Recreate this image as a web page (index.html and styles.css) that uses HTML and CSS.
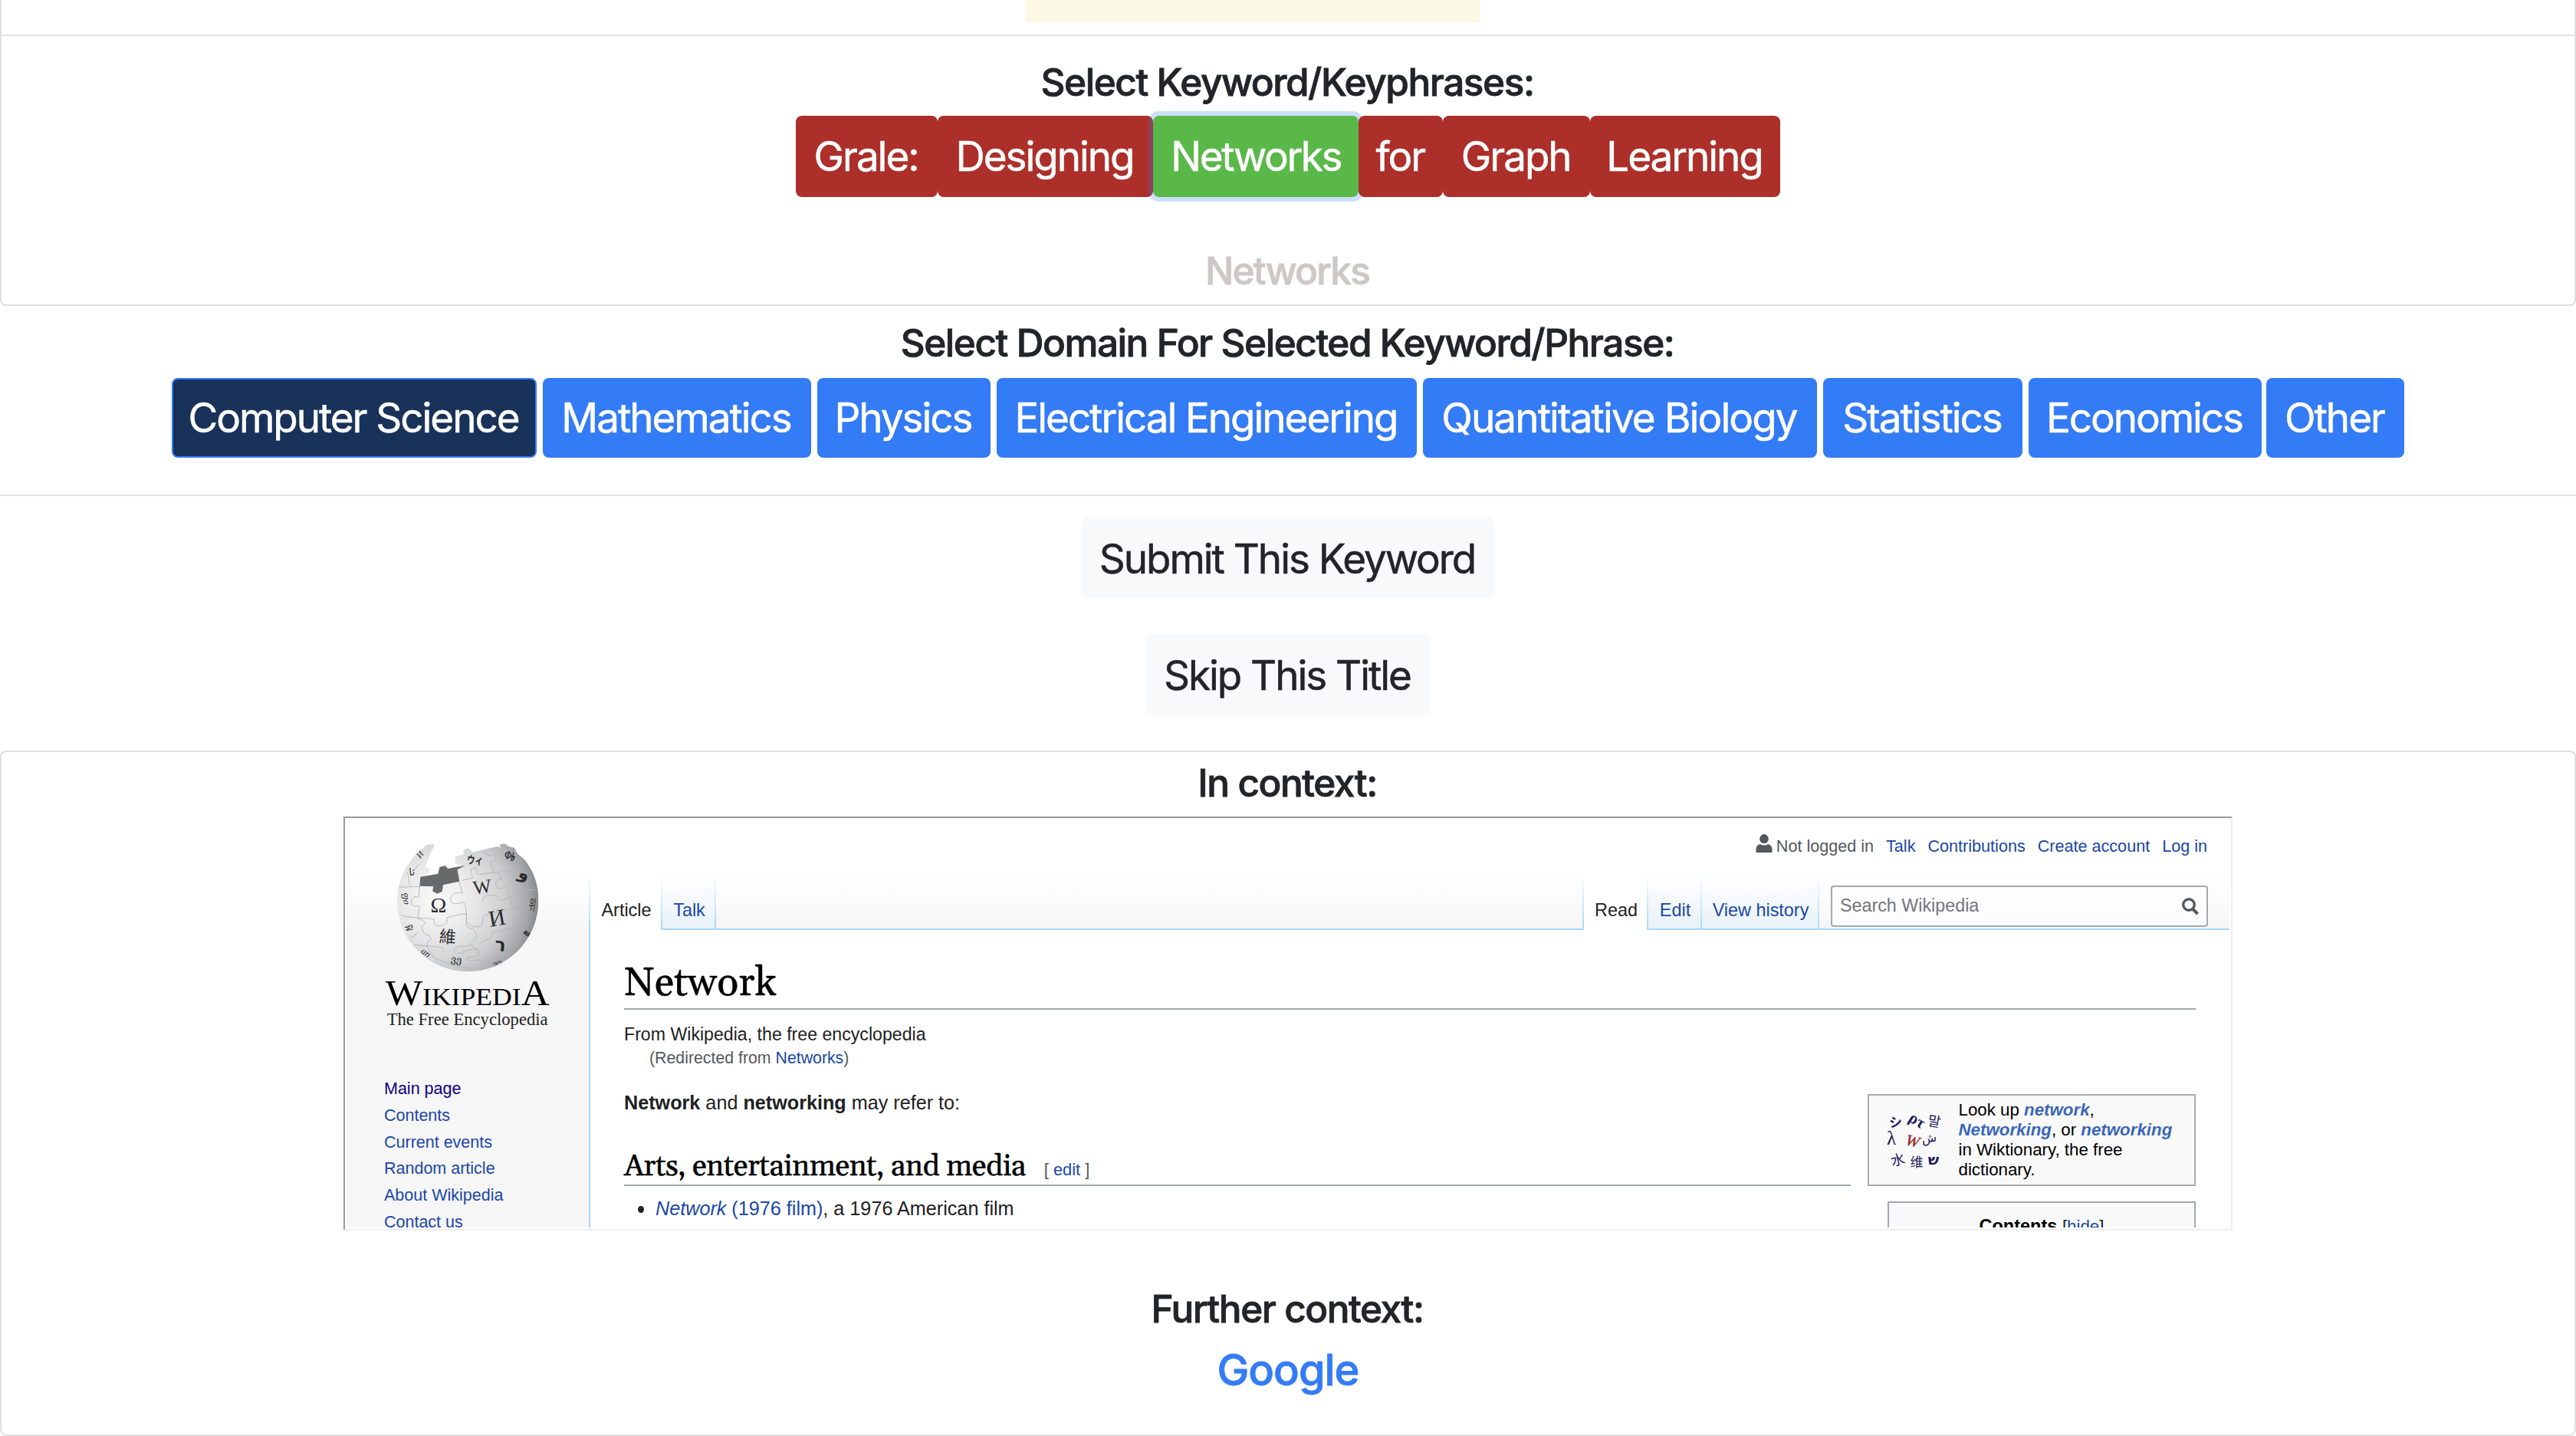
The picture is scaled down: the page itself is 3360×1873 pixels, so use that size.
FILE: index.html
```html
<!DOCTYPE html>
<html lang="en">
<head>
<meta charset="utf-8">
<title>Keyword selection</title>
<link rel="stylesheet" href="styles.css">
</head>
<body>
<section class="card card-keywords">
  <div class="notice"></div>
  <hr class="rule rule-top">
  <h4 class="heading">Select Keyword/Keyphrases:</h4>
  <div class="words">
    <button class="btn word" style="width:184.5px">Grale:</button>
    <button class="btn word" style="width:281.5px">Designing</button>
    <button class="btn word word-on" style="width:268px">Networks</button>
    <button class="btn word" style="width:110px">for</button>
    <button class="btn word" style="width:192px">Graph</button>
    <button class="btn word" style="width:247.5px">Learning</button>
  </div>
  <h4 class="heading selected">Networks</h4>
</section>

<section class="domain">
  <h4 class="heading">Select Domain For Selected Keyword/Phrase:</h4>
  <div class="domains">
    <button class="btn dom dom-on" style="width:476px">Computer Science</button>
    <button class="btn dom" style="width:350px">Mathematics</button>
    <button class="btn dom" style="width:226px">Physics</button>
    <button class="btn dom" style="width:548px">Electrical Engineering</button>
    <button class="btn dom dom-wide" style="width:514px">Quantitative Biology</button>
    <button class="btn dom" style="width:260px">Statistics</button>
    <button class="btn dom" style="width:304px">Economics</button>
    <button class="btn dom" style="width:180px">Other</button>
  </div>
  <hr class="rule">
</section>

<section class="actions">
  <button class="btn light" style="width:540px">Submit This Keyword</button>
  <button class="btn light" style="width:372px">Skip This Title</button>
</section>

<section class="card card-context">
  <h4 class="heading">In context:</h4>
  <div class="frame">
    <div class="wiki">
      <aside class="side">
        <svg class="logo" viewBox="210 140 660 750" width="220" height="250">
          <defs>
            <radialGradient id="ball" gradientUnits="userSpaceOnUse" cx="420" cy="370" r="420">
              <stop offset="0" stop-color="#fafafa"/><stop offset=".35" stop-color="#e8e8e9"/><stop offset=".65" stop-color="#cbccce"/><stop offset=".86" stop-color="#a3a4a7"/><stop offset="1" stop-color="#77787b"/>
            </radialGradient>
            <clipPath id="sphere"><path d="M382 154L408 152L410 160L396 182L386 214L374 238L390 250L388 270L355 282L352 316L400 322L402 340L424 344L440 334L438 318L506 298L502 250L528 238L490 228L492 200L526 192L522 176L540 168L554 176L556 184L660 160L670 170L664 154L684 150L702 162L722 166L736 190L762 212C800 260 817 310 817 374A276 276 0 0 1 264 374C264 280 316 198 382 154Z"/></clipPath>
          </defs>
          <g clip-path="url(#sphere)">
            <rect x="260" y="140" width="560" height="515" fill="url(#ball)"/>
            <g fill="none" stroke="#b0b1b3" stroke-width="2.6" stroke-linejoin="round">
              <path d="M268 320C300 322 330 318 352 318M352 318L348 360C330 350 314 368 322 388C332 402 344 388 350 396L346 444M280 430C310 442 380 440 410 446C404 470 420 478 438 470C468 466 456 452 460 440C490 430 520 424 536 426"/>
              <path d="M506 298L520 344C490 334 468 356 474 376C484 394 508 380 524 380C540 400 530 430 538 460C552 474 570 480 588 474C606 460 592 440 604 432C630 424 676 412 696 408"/>
              <path d="M536 426L534 470C550 490 562 474 572 500C580 524 552 536 550 544C566 562 588 566 584 584C570 600 540 586 536 602C546 616 580 600 594 606L600 640"/>
              <path d="M520 294L560 284C552 262 548 244 566 246C584 248 566 266 584 270L660 262C670 244 674 268 690 258L732 246C740 230 726 214 744 214L766 214"/>
              <path d="M600 376C596 358 612 352 630 354C664 346 656 366 668 372C690 370 730 354 726 340C740 326 780 334 806 330"/>
              <path d="M660 262L672 290C650 286 644 306 656 322C668 334 680 318 688 316C706 324 696 344 704 362L716 400C742 406 760 404 756 420C744 434 736 420 736 444C746 470 768 450 780 468"/>
              <path d="M610 178C614 204 626 196 642 192C660 202 650 218 634 220C620 232 646 244 640 262"/>
              <path d="M346 444C370 450 380 460 364 470C352 482 372 510 388 510C402 516 396 534 384 530L380 552L404 590M346 500C330 500 340 516 318 514M330 546C370 550 410 552 440 556C454 566 440 574 446 574M488 578C480 558 500 550 530 552L560 546M588 540C620 520 640 520 636 500C650 486 664 500 686 484L716 478"/>
              <path d="M500 580C510 572 524 590 520 572L580 560M706 520C700 490 720 474 724 500L762 484M620 616C650 590 680 600 706 580M300 260C320 290 300 290 318 320M400 590C450 620 520 640 560 636M328 256L350 230"/>
            </g>
            <g fill="#2b2b2d" font-family="'Liberation Serif', 'DejaVu Serif', serif" text-anchor="middle">
              <text x="426" y="420" font-size="84">Ω</text>
              <text transform="translate(600 344) rotate(-8)" font-size="76">W</text>
              <text transform="translate(660 470) rotate(-10)" font-size="90">И</text>
              <text transform="translate(460 538) rotate(4)" font-size="66" font-family="'Noto Sans CJK TC', sans-serif">維</text>
              <text transform="translate(568 230) rotate(4) scale(.75 1)" font-size="42" font-weight="bold" font-family="'Noto Sans CJK JP', sans-serif">ウィ</text>
              <text transform="translate(666 570) rotate(5)" font-size="72" font-weight="bold" font-family="'DejaVu Sans', sans-serif">ר</text>
              <text transform="translate(754 288) rotate(20)" font-size="66" font-weight="bold" font-family="'DejaVu Sans', sans-serif">و</text>
              <text transform="translate(790 410) rotate(8) scale(.5 1)" font-size="58" font-family="'Noto Sans CJK KR', sans-serif">위</text>
              <text transform="translate(700 212) rotate(20) scale(.7 1)" font-size="46" font-weight="bold">Ф৳</text>
              <text transform="translate(324 274) rotate(-20)" font-size="40" font-style="italic">تا</text>
              <text transform="translate(362 200) rotate(-50)" font-size="34" font-style="italic">И</text>
              <text transform="translate(288 366) rotate(86)" font-size="34" font-style="italic">ფი</text>
              <text transform="translate(296 480) rotate(66)" font-size="36" font-style="italic">ฟิ</text>
              <text transform="translate(370 586) rotate(38)" font-size="36" font-style="italic">an</text>
              <text transform="translate(494 616) rotate(8)" font-size="38">ვე</text>
              <text transform="translate(658 624) rotate(-18)" font-size="24">უო</text>
              <text transform="translate(786 512) rotate(-55)" font-size="36" font-weight="bold">จิ</text>
            </g>
          </g>
          <path d="M355 280L424 268L430 242L452 236L462 248L530 235L500 252L508 298L444 312L440 338L420 346L402 336L406 318L352 316Z" fill="#68696a"/>
          <g fill="#000" font-family="'Liberation Serif', serif">
            <text x="218" y="781" font-size="96" textLength="642" lengthAdjust="spacingAndGlyphs"><tspan font-size="138">W</tspan><tspan>IKIPEDI</tspan><tspan font-size="138">A</tspan></text>
            <text x="224" y="859" font-size="70" fill="#222" textLength="630" lengthAdjust="spacingAndGlyphs">The Free Encyclopedia</text>
          </g>
        </svg>
        <nav class="links">
          <a class="visited">Main page</a><a>Contents</a><a>Current events</a><a>Random article</a><a>About Wikipedia</a><a>Contact us</a>
        </nav>
      </aside>
      <div class="main">
        <header class="top">
          <div class="personal">
            <svg width="22" height="24" viewBox="0 0 22 24"><ellipse cx="11" cy="6.2" rx="5.8" ry="6.1" fill="#54595d"/><path d="M.5 24v-4.500c0-3.500 2.500-6 5.500-6.500 1.500 1.200 3 1.600 5 1.600s3.500-.4 5-1.600c3 .5 5.500 3 5.500 6.500v4.500z" fill="#54595d"/></svg>
            <span class="anon">Not logged in</span><a>Talk</a><a>Contributions</a><a>Create account</a><a>Log in</a>
          </div>
          <div class="tabs">
            <i class="sep"></i><span class="tab tab-on" style="width:92px">Article</span><i class="sep"></i><a class="tab" style="width:68px">Talk</a><i class="sep"></i>
            <span class="fill"></span>
            <i class="sep"></i><span class="tab tab-on" style="width:82px">Read</span><i class="sep"></i><a class="tab" style="width:68px">Edit</a><i class="sep"></i><a class="tab" style="width:151px">View history</a><i class="sep"></i>
            <div class="searchwrap"><div class="search"><span>Search Wikipedia</span>
              <svg width="22" height="23" viewBox="0 0 22 23" fill="none" stroke="#54595d"><circle cx="9" cy="9" r="7.300" stroke-width="3.400"/><path d="M13.800 14.200L20.500 21.200" stroke-width="4"/></svg></div></div>
          </div>
        </header>
        <article class="article">
          <h1>Network</h1>
          <div class="sub">From Wikipedia, the free encyclopedia</div>
          <div class="redir">(Redirected from <a>Networks</a>)</div>
          <div class="cols">
            <div class="text">
              <p><b>Network</b> and <b>networking</b> may refer to:</p>
              <h2>Arts, entertainment, and media<span class="edit">[ <a>edit</a> ]</span></h2>
              <ul><li><a><i>Network</i> (1976 film)</a>, a 1976 American film</li></ul>
            </div>
            <div class="boxes">
              <div class="wikt">
                <svg width="84" height="84" viewBox="0 0 84 84" fill="#1d1a5c" text-anchor="middle" font-family="'Liberation Serif', serif">
                  <text transform="translate(17 20) rotate(-4)" font-size="17" font-weight="bold" font-family="'Noto Sans CJK JP', sans-serif">シ</text>
                  <text transform="translate(41 17) rotate(32)" font-size="21" font-weight="bold">ρτ</text>
                  <text transform="translate(66 19) rotate(10)" font-size="18" font-family="'Noto Sans CJK KR', sans-serif">말</text>
                  <text x="11" y="43" font-size="25">λ</text>
                  <text transform="translate(37 45) rotate(14)" font-size="21" font-style="italic" font-weight="bold" fill="#9b3730">W</text>
                  <text transform="translate(61 40) rotate(-8)" font-size="16" font-family="'DejaVu Sans', sans-serif">ش</text>
                  <text transform="translate(21 69) rotate(-14)" font-size="18" font-family="'Noto Sans CJK JP', sans-serif">水</text>
                  <text x="44" y="72" font-size="17" font-family="'Noto Sans CJK SC', sans-serif">维</text>
                  <text x="66" y="69" font-size="19" font-weight="bold" font-family="'DejaVu Sans', sans-serif">ש</text>
                </svg>
                <div>Look up <a>network</a>,<br><a>Networking</a>, or <a>networking</a><br>in Wiktionary, the free<br>dictionary.</div>
              </div>
              <div class="toc"><b>Contents</b> <span>[<a>hide</a>]</span></div>
            </div>
          </div>
        </article>
      </div>
    </div>
  </div>
  <h4 class="heading further">Further context:</h4>
  <a class="google">Google</a>
</section>
</body>
</html>
```
FILE: styles.css
```css
* { box-sizing: border-box; }
body { margin: 0; background: #fff; color: #212529; font-family: Inter, "Liberation Sans", sans-serif; overflow: hidden; }
h1, h2, h4, p, ul { margin: 0; padding: 0; }
a { color: #1b47a9; text-decoration: none; }

.card { border: 2px solid #dfdfdf; border-radius: 8px; }
.card-keywords { height: 399px; border-top: 0; border-radius: 0 0 8px 8px; }
.notice { width: 592px; height: 29px; margin-left: 1336px; background: #fbf8e3; }
.rule { height: 2px; margin: 0; border: 0; background: #e5e5e5; }
.rule-top { margin-top: 16px; }
.heading { padding-right: 2px; font-size: 49.5px; line-height: 60px; font-weight: 500; letter-spacing: -1.45px; text-align: center; -webkit-text-stroke: .8px currentColor; }
.rule-top + .heading { margin-top: 30px; }
.selected { margin-top: 66px; color: #cec7c7; letter-spacing: -1.8px; }

.btn { flex: none; height: 106px; padding: 0 2px 0 0; border: 0; border-radius: 8px; font: 400 53px/106px Inter, "Liberation Sans", sans-serif; letter-spacing: -2.05px; text-align: center; white-space: nowrap; color: #fff; -webkit-text-stroke: .5px currentColor; }
.words { display: flex; justify-content: center; margin-top: 14px; }
.word { background: #ad2f2a; }
.word-on { padding: 0; background: #5ab848; box-shadow: 0 0 0 6px rgba(51, 122, 247, .25); letter-spacing: -2.4px; }

.domain { padding-top: 18px; }
.domains { display: flex; gap: 8px; width: 2912px; margin: 16px auto 48px; }
.dom { height: 104px; padding-top: 1px; line-height: 99px; border: 2px solid #347bf6; background: #347bf6; }
.dom:last-child { margin-left: -2px; }
.dom-wide { letter-spacing: -1.9px; }
.dom-on { background: #193259; }

.actions { display: flex; flex-direction: column; align-items: center; gap: 46px; padding: 28px 0 46px; }
.light { padding-top: 2px; line-height: 104px; background: #f8f9fb; color: #212529; }

.card-context { height: 894px; padding-top: 10px; }
.further { margin-top: 72px; }
.google { display: block; margin-top: 16px; font-size: 56px; line-height: 68px; font-weight: 500; letter-spacing: -1.05px; text-align: center; color: #347bf6; -webkit-text-stroke: .8px currentColor; }

.frame { width: 2464px; height: 540px; margin: 14px 0 0 446px; padding: 2px; border: 2px solid; border-color: #9a9a9a #eee #eee #9a9a9a; }
.wiki { display: flex; height: 532px; overflow: hidden; font-family: "Liberation Sans", sans-serif; color: #202122; background: linear-gradient(#fff 72px, #f6f6f6 144px); }
.side { flex: none; width: 316px; padding: 28px 0 0 48px; }
.logo { display: block; }
.links { display: flex; flex-direction: column; padding: 56px 0 0 1px; font-size: 21.5px; line-height: 34.75px; }
.links .visited { color: #0b0080; }
.main { flex: 1; min-width: 0; display: flex; flex-direction: column; }
.top { flex: none; height: 144px; display: flex; flex-direction: column; justify-content: space-between; }
.personal { display: flex; justify-content: flex-end; gap: 16px; padding: 19px 29px 0 0; font-size: 21.6px; line-height: 31px; }
.personal svg { margin-right: -11px; }
.anon { color: #54595d; }

.tabs { display: flex; height: 72px; }
.sep { flex: none; width: 2px; background: linear-gradient(#fff, #a7d7f9); }
.tab { flex: none; padding: 29px 0 0 2px; font-size: 23.4px; line-height: 35px; text-align: center; background: linear-gradient(#fff, #e8f2f8); border-bottom: 2px solid #a7d7f9; }
.tab-on { background: #fff; border-bottom: 0; }
.fill { flex: 1; border-bottom: 2px solid #a7d7f9; }
.searchwrap { flex: none; width: 535px; padding: 14px 28px 0 15px; border-bottom: 2px solid #a7d7f9; }
.search { display: flex; justify-content: space-between; align-items: center; height: 54px; padding: 0 10px 1px 10px; border: 2px solid #a2a9b1; border-radius: 4px; background: rgba(255, 255, 255, .5); font-size: 23.3px; color: #72777d; }
.search svg { margin-top: 2px; }

.article { flex: 1; padding: 40px 44px 0 44px; border-left: 2px solid #a7d7f9; background: #fff; }
h1, h2 { font-family: Gelasio, "Liberation Serif", serif; font-weight: 400; color: #000; border-bottom: 2px solid #a2a9b1; white-space: nowrap; -webkit-text-stroke: .4px currentColor; }
h1 { height: 64px; font-size: 52px; line-height: 60px; }
.sub { margin-top: 15px; font-size: 23.15px; line-height: 34px; }
.redir { padding-left: 33px; font-size: 21.3px; line-height: 28px; color: #54595d; }
.cols { display: flex; justify-content: space-between; }
.text { width: 1600px; padding-top: 24px; font-size: 25.2px; line-height: 40px; }
h2 { height: 50px; margin-top: 39px; font-size: 38.9px; line-height: 50px; letter-spacing: -.52px; }
.edit { margin-left: 24px; font: 21.8px/46px "Liberation Sans", sans-serif; letter-spacing: 0; color: #54595d; -webkit-text-stroke: 0; }
ul { list-style: none; margin-top: 9px; }
li { display: flex; align-items: center; white-space: pre; }
li::before { content: ""; width: 8px; height: 9px; margin: 3px 15px 0 18px; border-radius: 50%; background: #202122; }

.boxes { width: 428px; padding-top: 33px; display: flex; flex-direction: column; align-items: flex-end; gap: 20px; }
.wikt { display: flex; gap: 14.500px; width: 428px; height: 120px; padding: 6px 0 0 18px; border: 2px solid #aaa; background: #f9f9f9; color: #000; font-size: 22.3px; line-height: 26px; white-space: nowrap; }
.wikt svg { flex: none; margin-top: 15px; }
.wikt a { font-weight: bold; font-style: italic; color: #3a67b8; letter-spacing: 0; }
.toc { width: 402px; height: 120px; padding-top: 10px; border: 2px solid #a2a9b1; background: #f8f9fa; text-align: center; font-size: 23.5px; line-height: 40px; color: #000; }
.toc span { font-size: 22.3px; color: #202122; }
```
